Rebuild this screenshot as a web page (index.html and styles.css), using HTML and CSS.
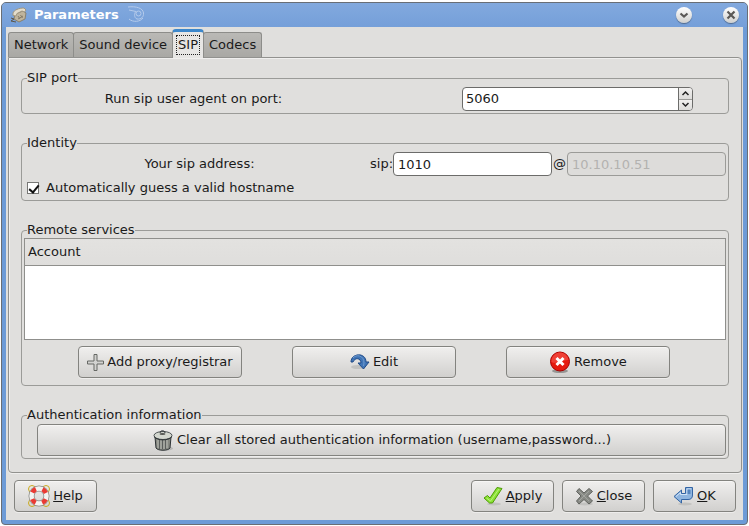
FILE: index.html
```html
<!DOCTYPE html>
<html lang="en">
<head>
  <meta charset="UTF-8">
  <meta name="viewport" content="width=device-width, initial-scale=1">
  <title>Parameters</title>
  <link rel="stylesheet" href="styles.css">
</head>
<body>

  <div class="window">
    <header class="titlebar">
      <svg class="app-icon" width="18" height="18" viewBox="0 0 18 18" aria-hidden="true">
        <path d="M5 8 L4 13 L9 16 L15 13 L16 7 L13 5 Z" fill="#bfb49c" stroke="#8a806c"/>
        <path d="M3 7 C4 4 9 2 14 2 L16 4 L14.500 6 L12 5 L7 7.500 L6 10 L3 9.500 Z" fill="#e4ddcc" stroke="#a0967f"/>
        <path d="M8 10 l2 3 M10.500 9 l2 3 M8 13 l5 -3" stroke="#857b68"/>
        <path d="M1 12 l3 1 l-3 2 l5 1" fill="none" stroke="#5c564a"/>
      </svg>
      <h1>Parameters</h1>
      <svg class="swirl" width="18" height="18" viewBox="0 0 18 18" aria-hidden="true">
        <path d="M1 2 C9 1 16 3 16.500 8 C17 12 14 14.500 10 14 C7 13 7 8 9 6.500 L2 5" fill="none" stroke="#b5cbeb"/>
        <circle cx="11.500" cy="8.500" r="2.500" fill="none" stroke="#b5cbeb"/>
        <path d="M2 14 C6 17.500 13 17 16 13" fill="none" stroke="#b5cbeb"/>
      </svg>
      <div class="window-buttons">
        <button class="round" aria-label="Minimize">
          <svg width="16" height="16" viewBox="0 0 16 16"><path d="M4.500 6.500 L8 9.500 L11.500 6.500" fill="none" stroke="#5a5856" stroke-width="2.200"/></svg>
        </button>
        <button class="round" aria-label="Close window">
          <svg width="16" height="16" viewBox="0 0 16 16"><path d="M4.500 4.500 L11.500 11.500 M11.500 4.500 L4.500 11.500" stroke="#5a5856" stroke-width="2.200"/></svg>
        </button>
      </div>
    </header>

    <main class="content">
      <div class="tabs" role="tablist">
        <button class="tab" role="tab">Network</button>
        <button class="tab" role="tab">Sound device</button>
        <button class="tab selected" role="tab" aria-selected="true"><span>SIP</span></button>
        <button class="tab" role="tab">Codecs</button>
      </div>

      <section class="panel" role="tabpanel">
        <fieldset>
          <legend>SIP port</legend>
          <div class="row port-row">
            <label for="port">Run sip user agent on port:</label>
            <div class="spin">
              <input type="text" inputmode="numeric" id="port" value="5060">
              <div class="steps">
                <button aria-label="Increase"><svg width="9" height="6" viewBox="0 0 9 6"><path d="M1.500 5 L4.500 2 L7.500 5" fill="none" stroke="#222" stroke-width="1.500"/></svg></button>
                <button aria-label="Decrease"><svg width="9" height="6" viewBox="0 0 9 6"><path d="M1.500 1 L4.500 4 L7.500 1" fill="none" stroke="#222" stroke-width="1.500"/></svg></button>
              </div>
            </div>
          </div>
        </fieldset>

        <fieldset>
          <legend>Identity</legend>
          <div class="row">
            <label for="user">Your sip address:</label>
            <div class="address">
              <span>sip:</span>
              <input class="field" type="text" id="user" value="1010">
              <label for="host">@</label>
              <input class="field" type="text" id="host" value="10.10.10.51" disabled>
            </div>
          </div>
          <label class="check">
            <input type="checkbox" checked>
            Automatically guess a valid hostname
          </label>
        </fieldset>

        <fieldset>
          <legend>Remote services</legend>
          <div class="list">
            <table>
              <thead>
                <tr><th>Account</th></tr>
              </thead>
            </table>
          </div>
          <div class="actions">
            <button class="btn">
              <svg width="17" height="17" viewBox="0 0 17 17" aria-hidden="true"><path d="M7 0.500 H10 V7 H16.500 V10 H10 V16.500 H7 V10 H0.500 V7 H7 Z" fill="#d2d2d0" stroke="#666864"/></svg>
              Add proxy/registrar
            </button>
            <button class="btn">
              <svg width="20" height="18" viewBox="0 0 20 18" aria-hidden="true">
                <ellipse cx="8" cy="14" rx="7" ry="2" fill="#c2c2c0"/>
                <path d="M1 9 C1 0 16 -1 16 9 H19 L13.500 16 L8 10 H11 C11 5 5 4 3 9 Z" fill="#3f74b6" stroke="#204a87"/>
                <path d="M3 5 C6 1 14 2 14 10 L13.500 13" fill="none" stroke="#6f9ace"/>
              </svg>
              Edit
            </button>
            <button class="btn">
              <svg width="22" height="22" viewBox="0 0 22 22" aria-hidden="true">
                <ellipse cx="11" cy="20" rx="8" ry="2" fill="#969694"/>
                <circle cx="11" cy="10.500" r="9.500" fill="#e51a0e" stroke="#a80000"/>
                <path d="M2.500 11 A8.500 8.500 0 0 1 19.500 9 C15 8 8 14 2.500 11" fill="#ef4036"/>
                <path d="M7.500 7 L14.500 14 M14.500 7 L7.500 14" stroke="#fff" stroke-width="3"/>
              </svg>
              Remove
            </button>
          </div>
        </fieldset>

        <fieldset>
          <legend>Authentication information</legend>
          <button class="btn clear">
            <svg width="22" height="22" viewBox="0 0 22 22" aria-hidden="true">
              <ellipse cx="13" cy="19.500" rx="8" ry="2" fill="#b5b5b3"/>
              <path d="M3 8 L4 19 C6 22 16 22 18 19 L19 8 Z" fill="#858780" stroke="#2e3436"/>
              <path d="M7.500 10 V20 M10.500 10 V20 M13.500 10 V20" stroke="#5b5e5c"/>
              <path d="M6 10 V19 M9 10 V20 M12 10 V20 M15 10 V19" stroke="#babdb6"/>
              <ellipse cx="11" cy="6.500" rx="9" ry="4" fill="#d3d7cf" stroke="#4e5456"/>
              <path d="M2 7.500 C5 12 17 12 20 7.500" fill="none" stroke="#2e3436"/>
              <path d="M8 4 C8 1 13 1 13 4" fill="none" stroke="#2e3436"/>
              <ellipse cx="10.500" cy="5" rx="3" ry="1" fill="#555753"/>
            </svg>
            Clear all stored authentication information (username,password...)
          </button>
        </fieldset>
      </section>

      <footer class="footer">
        <button class="btn help">
          <svg width="22" height="22" viewBox="0 0 22 22" aria-hidden="true">
            <g fill="none" stroke="#c9a91c">
              <circle cx="4" cy="4" r="3.500"/><circle cx="18" cy="4" r="3.500"/><circle cx="4" cy="18" r="3.500"/><circle cx="18" cy="18" r="3.500"/>
            </g>
            <circle cx="11" cy="11" r="7.500" fill="none" stroke="#8a8a85" stroke-width="6"/>
            <circle cx="11" cy="11" r="7.500" fill="none" stroke="#f3f3f1" stroke-width="4.500"/>
            <circle cx="11" cy="11" r="7.500" fill="none" stroke="#ea3a33" stroke-width="4.500" stroke-dasharray="5 6.780" stroke-dashoffset="-3.390"/>
          </svg>
          <span><u>H</u>elp</span>
        </button>
        <button class="btn">
          <svg width="20" height="20" viewBox="0 0 20 20" aria-hidden="true">
            <ellipse cx="11" cy="18" rx="7" ry="1.500" fill="#c2c2c0"/>
            <path d="M1 12 L4.500 9.500 L7 12 L14 1.500 L19 2.500 L9.500 17 H6.500 Z" fill="#8ae234" stroke="#4e9a06" stroke-linejoin="round"/>
            <path d="M3.500 12 L7.500 15 L16 3" fill="none" stroke="#b9f27c"/>
          </svg>
          <span><u>A</u>pply</span>
        </button>
        <button class="btn">
          <svg width="19" height="19" viewBox="0 0 19 19" aria-hidden="true">
            <ellipse cx="10" cy="17" rx="8" ry="1.500" fill="#c2c2c0"/>
            <path d="M4 1.500 L9 6 L14 1.500 L17.500 4.500 L12.500 9 L17.500 14 L14 17 L9 12.500 L4 17 L1.500 14 L6 9 L1.500 4.500 Z" fill="#888a85" stroke="#60625e" stroke-linejoin="round"/>
            <path d="M4 4 L14 14 M14 4 L4 14" stroke="#a2a49f"/>
          </svg>
          <span><u>C</u>lose</span>
        </button>
        <button class="btn">
          <svg width="21" height="20" viewBox="0 0 21 20" aria-hidden="true">
            <ellipse cx="12" cy="18" rx="7" ry="1.500" fill="#c2c2c0"/>
            <path d="M1 10.500 L8.500 4 V7.500 H12.500 V1.500 H19.500 V9 C19.500 12 18 13.500 15 13.500 H8.500 V17 Z" fill="#8fb5df" stroke="#3465a4" stroke-linejoin="round"/>
            <path d="M3 10.500 L7.500 6.500 V8.500 H14 V3 H18" fill="none" stroke="#d3e4f6"/>
            <path d="M14.500 3.500 H17.500 V8 H14.500 Z" fill="#5685bd"/>
          </svg>
          <span><u>O</u>K</span>
        </button>
      </footer>
    </main>
  </div>

</body>
</html>
```
FILE: styles.css
```css
* {
  box-sizing: border-box;
}

body {
  font-family: 'DejaVu Sans', sans-serif;
  font-size: 13px;
  line-height: 16px;
  color: #1a1a1a;
  background: #fff;
  margin: 0;
  padding: 2px 1px 1px 1px;
  min-height: 100vh;
  display: flex;
}

button,
input {
  font: inherit;
  color: inherit;
  margin: 0;
}

button {
  padding: 0;
}

svg {
  display: block;
  flex-shrink: 0;
}

.window {
  flex: 1;
  display: flex;
  flex-direction: column;
  background: #6d9bd7;
  border: 1px solid #696e75;
  border-radius: 5px 5px 4px 4px;
  padding: 0 4px 4px;
}

.titlebar {
  display: flex;
  align-items: center;
  height: 24px;
  padding: 0 8px 0 4px;
  margin: 0 -4px;
  background: linear-gradient(#82a9de, #759fd9);
  border-radius: 4px 4px 0 0;
}

.app-icon {
  margin: 0 6px 0 4px;
}

.titlebar h1 {
  font-size: 13px;
  margin: 0;
  color: #fff;
}

.swirl {
  margin: 0 0 2px 8px;
}

.window-buttons {
  display: flex;
  gap: 31px;
  margin-left: auto;
}

.round {
  width: 16px;
  height: 16px;
  border: none;
  border-radius: 50%;
  background: linear-gradient(#fff, #d0d0ce);
  box-shadow: 0 1px 1px #50698c;
}

.content {
  flex: 1;
  display: flex;
  flex-direction: column;
  background: #e0dfdd;
  padding: 2px 1px 0 2px;
}

.tabs {
  display: flex;
  align-items: flex-end;
}

.tab {
  height: 25px;
  padding: 0 5px;
  border: 1px solid #8d8d8a;
  border-bottom: none;
  border-radius: 3px 3px 0 0;
  background: linear-gradient(#bab9b6, #a9a8a4);
}

.tab + .tab {
  margin-left: -1px;
}

.tab.selected {
  position: relative;
  height: 29px;
  margin-bottom: -1px;
  padding: 0 3px;
  border-top: 3px solid #3c87cb;
  background: #e7e6e4;
  border-radius: 4px 4px 0 0;
}

.tab.selected span {
  display: block;
  padding: 1px;
  border: 1px dotted #222;
}

.panel {
  flex: 1;
  display: flex;
  flex-direction: column;
  gap: 21px;
  padding: 12px 12px 0;
  border: 1px solid #92928f;
  border-radius: 0 4px 4px 4px;
  box-shadow: inset 1px 1px #f0efee, 0 1px #efeeed;
}

fieldset {
  min-width: 0;
  margin: 0;
  padding: 0 2px 2px;
  border: 1px solid #9b9b98;
  border-radius: 4px;
}

legend {
  margin-left: 3px;
  padding: 0;
}

.row {
  display: grid;
  grid-template-columns: minmax(0, 1fr) minmax(0, 1fr);
  align-items: center;
  padding-top: 1px;
}

.row > label {
  text-align: center;
}

.port-row {
  grid-template-columns: 1fr 363px;
}

.spin {
  display: flex;
  justify-self: end;
  width: 231px;
  height: 24px;
  margin-right: 33px;
  border: 1px solid #6c6c6a;
  border-radius: 4px;
  background: #fff;
  overflow: hidden;
}

.spin input {
  flex: 1;
  min-width: 0;
  padding: 0 3px;
  border: none;
  background: none;
}

.steps {
  display: flex;
  flex-direction: column;
  width: 14px;
  border-left: 1px solid #6c6c6a;
}

.steps button {
  flex: 1;
  display: flex;
  align-items: center;
  justify-content: center;
  border: none;
  background: linear-gradient(#f1f0ef, #dddcda);
}

.steps button + button {
  border-top: 1px solid #9b9b98;
}

.address {
  display: flex;
  align-items: center;
  margin-left: -5px;
}

.field {
  flex: 1;
  min-width: 0;
  height: 24px;
  padding: 0 4px;
  border: 1px solid #6c6c6a;
  border-radius: 4px;
  background: #fff;
}

.field:disabled {
  background: #dddcda;
  border-color: #9b9b98;
  color: #b3b2b0;
}

.address label {
  margin: 0 1px;
}

.check {
  display: flex;
  align-items: center;
  gap: 7px;
  padding: 4px 0 2px 3px;
}

.check input {
  appearance: none;
  width: 12px;
  height: 12px;
  border: 1px solid #777775;
  background: #fff;
}

.check input:checked::before {
  content: "";
  display: block;
  width: 4px;
  height: 8px;
  margin: 0 0 0 3px;
  border: solid #111;
  border-width: 0 2px 2px 0;
  transform: rotate(40deg);
}

.list {
  height: 102px;
  border: 1px solid #8f8f8c;
  background: #fff;
}

table {
  width: 100%;
  border-collapse: collapse;
}

th {
  height: 26px;
  padding: 0 3px;
  font-weight: normal;
  text-align: left;
  background: linear-gradient(#e3e2e0, #dfdedc);
  border-bottom: 1px solid #8f8f8c;
}

.actions {
  display: flex;
  justify-content: center;
  gap: 50px;
  padding: 6px 2px 5px 0;
}

.btn {
  display: flex;
  align-items: center;
  justify-content: center;
  gap: 3px;
  height: 32px;
  border: 1px solid #83837f;
  border-radius: 4px;
  background: linear-gradient(#f0efee, #d1d0ce);
  box-shadow: inset 0 1px #f7f6f5, 0 1px #eeedec;
}

.actions .btn {
  width: 164px;
}

.clear {
  width: calc(100% - 13px);
  margin: 1px 0 0 13px;
}

.footer {
  display: flex;
  gap: 8px;
  padding: 7px 6px 8px;
}

.footer .btn {
  width: 83px;
}

.footer .help {
  margin-right: auto;
}
```
